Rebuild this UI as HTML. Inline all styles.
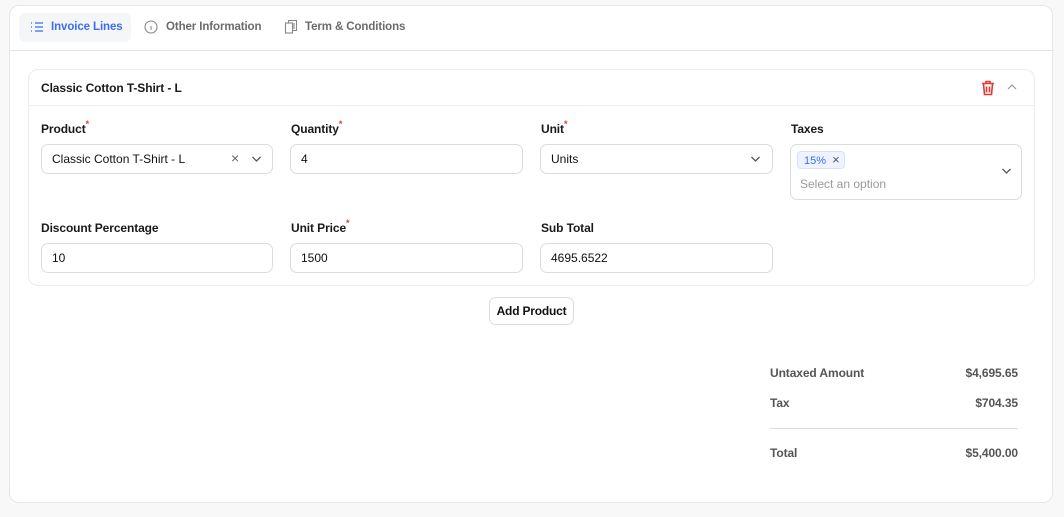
<!DOCTYPE html>
<html><head><style>
*{box-sizing:border-box;margin:0;padding:0}
body{width:1064px;height:517px;background:#f8f8f8;font-family:"Liberation Sans",sans-serif;position:relative;overflow:hidden;color:#111}
.a{position:absolute}
.card{left:9px;top:5px;width:1044px;height:498px;background:#fff;border:1px solid #e6e6e6;border-radius:10px}
.tabline{left:10px;top:50px;width:1042px;height:1px;background:#e5e5e5}
.tab{font-size:11.5px;font-weight:bold;color:#6b6b6b;top:20px;line-height:14px;letter-spacing:-0.1px}
.inner{left:28px;top:69px;width:1007px;height:217px;border:1px solid #ececec;border-radius:10px}
.lbl{font-size:12px;font-weight:bold;color:#1a1a1a;letter-spacing:-0.1px}
.lbl sup{color:#e53935;font-size:9px;vertical-align:top;position:relative;top:-3px}
.inp{height:30px;border:1px solid #dcdcdc;border-radius:7px;font-size:12px;padding:0 10px;line-height:28px;width:233px;color:#111}
.sum{font-size:12px;font-weight:bold;color:#555;letter-spacing:-0.1px}
</style></head><body>
<div class="a card"></div>
<div class="a" style="left:19px;top:13px;width:112px;height:29px;background:#f5f6f8;border-radius:6px"></div>
<svg class="a" style="left:30px;top:20px" width="14" height="14" viewBox="0 0 14 14" fill="none" stroke="#3b6ef5" stroke-width="1.3"><path d="M1 3h1M1 7h1M1 11h1M5 3h8M5 7h8M5 11h8"/></svg>
<div class="a tab" style="left:51px;color:#3b6ef5">Invoice Lines</div>
<svg class="a" style="left:144px;top:20px" width="14" height="14" viewBox="0 0 14 14" fill="none" stroke="#888" stroke-width="1.1"><circle cx="7" cy="7" r="6"/><path d="M7 6v4"/></svg>
<div class="a tab" style="left:166px">Other Information</div>
<svg class="a" style="left:284px;top:19px" width="14" height="15" viewBox="0 0 14 15" fill="none" stroke="#888" stroke-width="1.1"><rect x="1.5" y="4" width="7" height="10"/><path d="M4.5 4V1.5h8v10H8.5M10 4v6"/></svg>
<div class="a tab" style="left:305px">Term &amp; Conditions</div>
<div class="a tabline"></div>
<div class="a inner"></div>
<div class="a" style="left:29px;top:105px;width:1005px;height:1px;background:#eee"></div>
<div class="a lbl" style="left:41px;top:81px">Classic Cotton T-Shirt - L</div>
<svg class="a" style="left:981px;top:80px" width="14" height="16" viewBox="0 0 14 16" fill="none" stroke="#e53935" stroke-width="1.6"><path d="M1 3.5h12M5 3V1.5h4V3M2.5 4l1 10.5h7l1-10.5M5.5 6.5v6M8.5 6.5v6"/></svg>
<svg class="a" style="left:1007px;top:83px" width="10" height="8" viewBox="0 0 10 8" fill="none" stroke="#999" stroke-width="1.2"><path d="M1 6l4-4 4 4"/></svg>

<div class="a lbl" style="left:41px;top:122px">Product<sup>*</sup></div>
<div class="a lbl" style="left:291px;top:122px">Quantity<sup>*</sup></div>
<div class="a lbl" style="left:541px;top:122px">Unit<sup>*</sup></div>
<div class="a lbl" style="left:791px;top:122px">Taxes</div>
<div class="a inp" style="left:41px;top:144px;width:232px">Classic Cotton T-Shirt - L</div>
<div class="a" style="left:231px;top:150px;font-size:14px;color:#666">×</div>
<svg class="a" style="left:251px;top:155px" width="11" height="8" viewBox="0 0 11 8" fill="none" stroke="#555" stroke-width="1.3"><path d="M1.5 2l4 4 4-4"/></svg>
<div class="a inp" style="left:290px;top:144px">4</div>
<div class="a inp" style="left:540px;top:144px">Units</div>
<svg class="a" style="left:750px;top:155px" width="11" height="8" viewBox="0 0 11 8" fill="none" stroke="#555" stroke-width="1.3"><path d="M1.5 2l4 4 4-4"/></svg>
<div class="a inp" style="left:790px;top:144px;width:232px;height:56px"></div>
<div class="a" style="left:797px;top:151px;width:48px;height:18px;background:#eef3ff;border:1px solid #d6e2fb;border-radius:4px;font-size:11px;color:#3b6ef5;line-height:16px;padding-left:6px">15% <span style="color:#555;font-size:13px;margin-left:3px">×</span></div>
<div class="a" style="left:800px;top:177px;font-size:12px;color:#9a9a9a">Select an option</div>
<svg class="a" style="left:1001px;top:167px" width="11" height="8" viewBox="0 0 11 8" fill="none" stroke="#555" stroke-width="1.3"><path d="M1.5 2l4 4 4-4"/></svg>

<div class="a lbl" style="left:41px;top:221px">Discount Percentage</div>
<div class="a lbl" style="left:291px;top:221px">Unit Price<sup>*</sup></div>
<div class="a lbl" style="left:541px;top:221px">Sub Total</div>
<div class="a inp" style="left:41px;top:243px;width:232px">10</div>
<div class="a inp" style="left:290px;top:243px">1500</div>
<div class="a inp" style="left:540px;top:243px">4695.6522</div>

<div class="a" style="left:489px;top:297px;width:85px;height:28px;border:1px solid #dcdcdc;border-radius:7px;font-size:12px;font-weight:bold;text-align:center;line-height:26px;letter-spacing:-0.2px">Add Product</div>

<div class="a sum" style="left:770px;top:366px">Untaxed Amount</div>
<div class="a sum" style="left:900px;top:366px;width:118px;text-align:right">$4,695.65</div>
<div class="a sum" style="left:770px;top:396px">Tax</div>
<div class="a sum" style="left:900px;top:396px;width:118px;text-align:right">$704.35</div>
<div class="a" style="left:770px;top:428px;width:248px;height:1px;background:#ddd"></div>
<div class="a sum" style="left:770px;top:446px">Total</div>
<div class="a sum" style="left:900px;top:446px;width:118px;text-align:right">$5,400.00</div>
</body></html>
